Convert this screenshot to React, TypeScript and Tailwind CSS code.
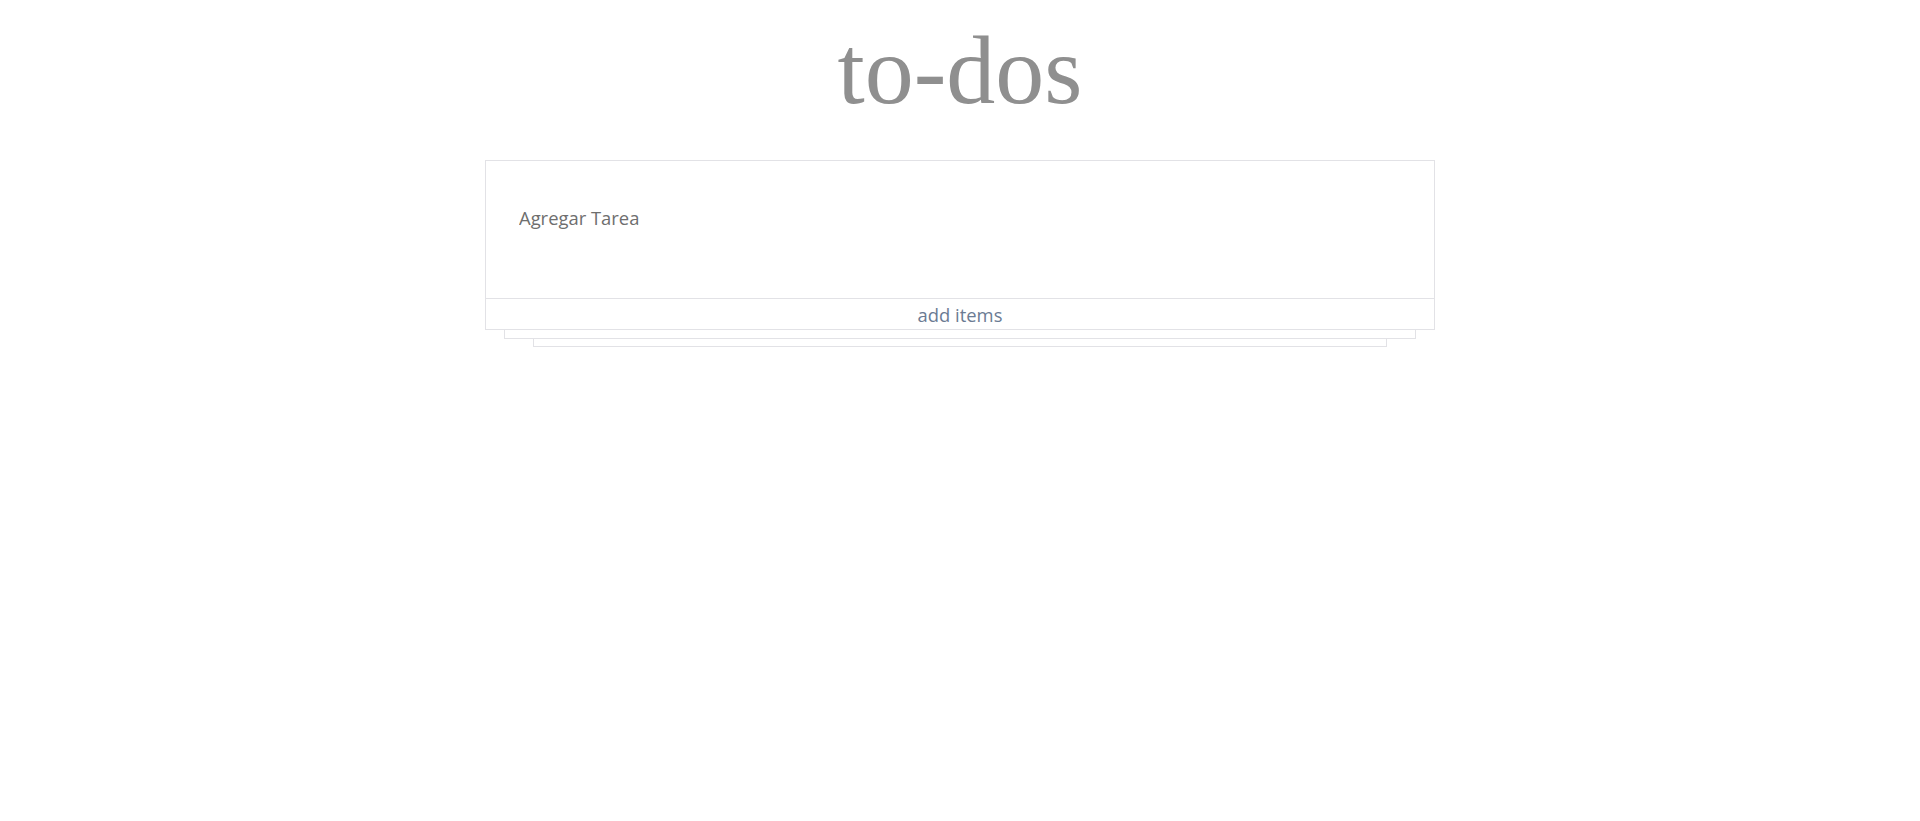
import React from "react";

export default function App() {
  return (
    <div className="min-h-[821px] w-full bg-white">
      <h1
        className="text-center text-[98px] leading-none text-[#8f8f8f] pt-[21px] h-[160px]"
        style={{ fontFamily: '"Liberation Serif", Georgia, serif' }}
      >
        to-dos
      </h1>
      <div className="mx-auto w-[950px]" style={{ fontFamily: '"Open Sans", "Noto Sans", sans-serif' }}>
        <div className="border border-[#e2e2e6] bg-white">
          <div className="h-[138px] border-b border-[#e2e2e6] px-[33px] pt-[45px]">
            <input
              className="w-full text-[18.4px] leading-[24px] text-[#6e6e6e] placeholder:text-[#6e6e6e] outline-none bg-transparent"
              placeholder="Agregar Tarea"
            />
          </div>
          <div className="h-[30px] flex items-center justify-center pt-[2px] text-[18.4px] text-[#6b7b93]">
            add items
          </div>
        </div>
        <div className="mx-[19px] h-[9px] border-x border-b border-[#e2e2e6]" />
        <div className="mx-[48px] h-[8px] border-x border-b border-[#e2e2e6]" />
      </div>
    </div>
  );
}
